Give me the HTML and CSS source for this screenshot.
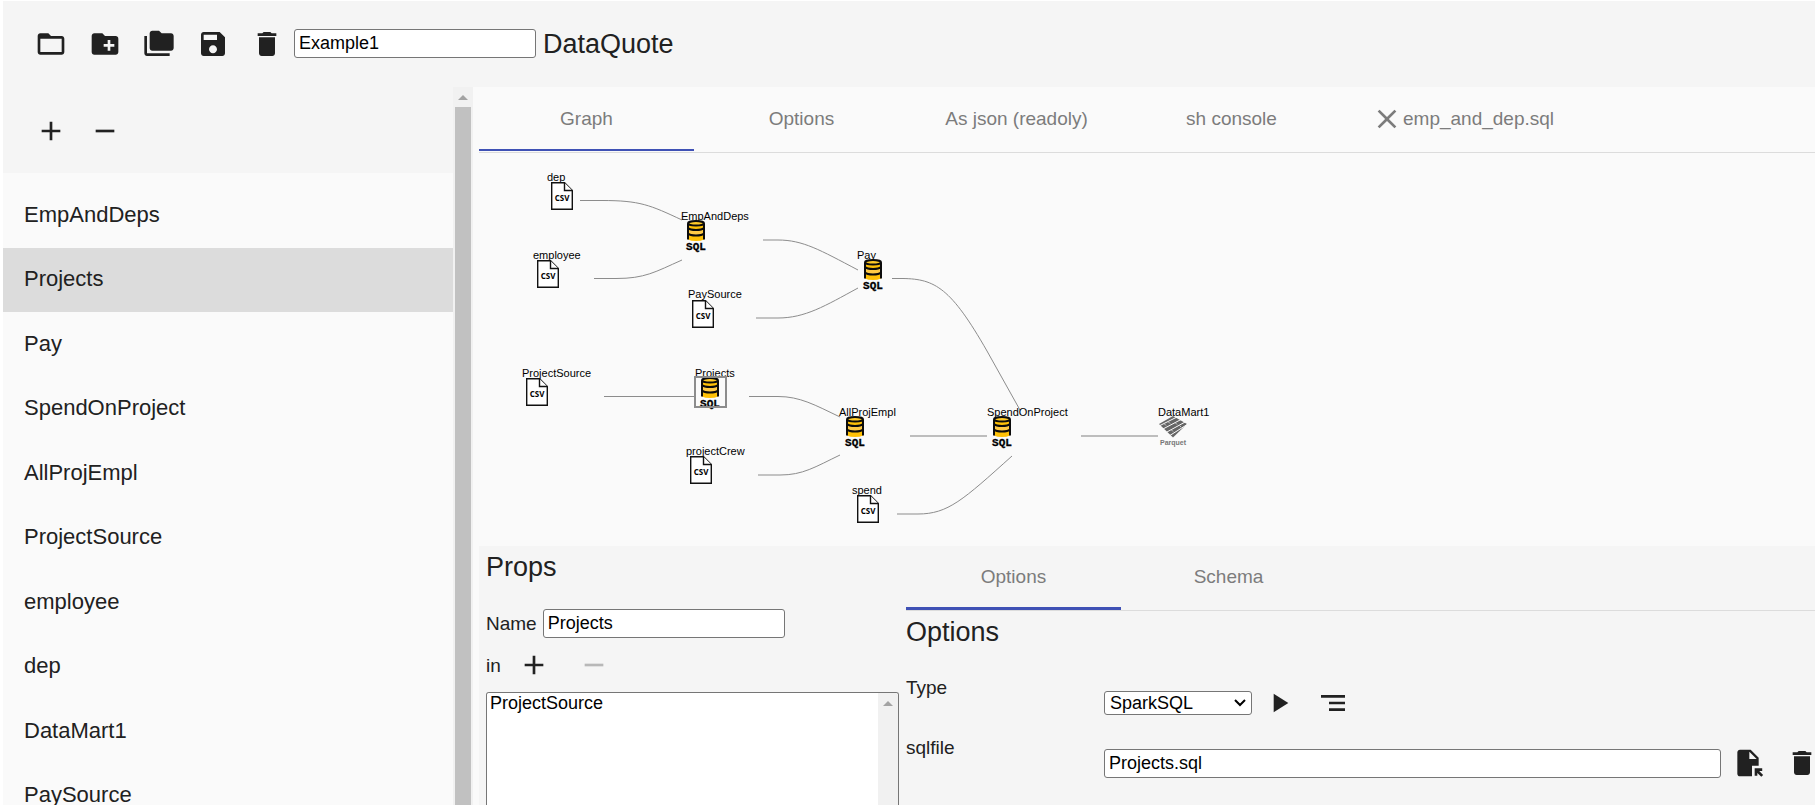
FILE: index.html
```html
<!DOCTYPE html>
<html lang="en">
<head>
<meta charset="utf-8">
<title>DataQuote</title>
<link rel="stylesheet" href="styles.css">
</head>
<body>
<svg class="defs" aria-hidden="true">
  <symbol id="i-add" viewBox="0 0 24 24"><path d="M19 13h-6v6h-2v-6H5v-2h6V5h2v6h6v2z"/></symbol>
  <symbol id="i-remove" viewBox="0 0 24 24"><path d="M19 13H5v-2h14v2z"/></symbol>
  <symbol id="i-delete" viewBox="0 0 24 24"><path d="M6 19c0 1.1.9 2 2 2h8c1.100 0 2-.9 2-2V7H6v12zM19 4h-3.500l-1-1h-5l-1 1H5v2h14V4z"/></symbol>
  <symbol id="csv" viewBox="0 0 22 28" overflow="visible">
    <path class="sheet" d="M.7.700H13.500L21.300 8.500V27.300H.7z"/><path class="sheet" d="M13.500.700V8.500H21.300"/>
    <text class="csv-text" x="11" y="19" text-anchor="middle">CSV</text>
  </symbol>
  <symbol id="sql" viewBox="0 0 20 32" overflow="visible">
    <path fill="#ffc107" d="M2 3.500h16V19.500q-3 1.500-8 1.500t-8-1.500z"/>
    <path fill="#ffca45" d="M2 8.500q8 4 16 0v5q-8 4-16 0z"/>
    <path class="db" d="M2 19.500V3.500M18 3.500V19.500M2 8q2 2 8 2t8-2M2 13.500q2 2 8 2t8-2"/>
    <ellipse class="db" fill="#ffca28" cx="10" cy="3.300" rx="8" ry="2.300"/>
    <text class="sql-text" x="10" y="30" text-anchor="middle">SQL</text>
  </symbol>
  <symbol id="parquet" viewBox="0 0 28 30" overflow="visible">
    <path fill="#666" d="M14 0L28 8 14 21.500 0 8z"/>
    <path class="gap" d="M-1 10.500L18 1M3 13.500L23 3M7 16.500L27 5.500M10 20L29 8"/>
    <path class="gap thin" d="M9 5.500L11 7.500M16 6.500L18 8.500M5 7.500L7 9.500M12 13.500L14 15.500M20 9L22 11"/>
    <text class="parquet-text" x="14" y="29" text-anchor="middle">Parquet</text>
  </symbol>
</svg>

<header class="toolbar main-bar">
  <button class="icon" aria-label="Open"><svg viewBox="0 0 24 24"><path d="M20 6h-8l-2-2H4c-1.100 0-1.990.9-1.990 2L2 18c0 1.100.9 2 2 2h16c1.100 0 2-.9 2-2V8c0-1.100-.9-2-2-2zm0 12H4V8h16v10z"/></svg></button>
  <button class="icon" aria-label="New"><svg viewBox="0 0 24 24"><path d="M20 6h-8l-2-2H4c-1.110 0-1.990.89-1.990 2L2 18c0 1.110.89 2 2 2h16c1.110 0 2-.89 2-2V8c0-1.110-.89-2-2-2zm-1 8h-3v3h-2v-3h-3v-2h3V9h2v3h3v2z"/></svg></button>
  <button class="icon" aria-label="Copy"><svg viewBox="0 0 24 24"><path d="M3 6H1v13c0 1.100.9 2 2 2h17v-2H3V6zm18-2h-7l-2-2H7c-1.100 0-2 .9-2 2v11c0 1.100.9 2 2 2h14c1.100 0 2-.9 2-2V6c0-1.100-.9-2-2-2z"/></svg></button>
  <button class="icon" aria-label="Save"><svg viewBox="0 0 24 24"><path d="M17 3H5c-1.110 0-2 .9-2 2v14c0 1.100.89 2 2 2h14c1.100 0 2-.9 2-2V7l-4-4zm-5 16c-1.660 0-3-1.340-3-3s1.340-3 3-3 3 1.340 3 3-1.340 3-3 3zm3-10H5V5h10v4z"/></svg></button>
  <button class="icon" aria-label="Delete"><svg><use href="#i-delete"/></svg></button>
  <input class="field" type="text" value="Example1" aria-label="Project name">
  <h1 class="title">DataQuote</h1>
</header>

<div class="body">
  <aside class="sidebar">
    <div class="side-scroll">
      <div class="toolbar side-bar">
        <button class="icon" aria-label="Add item"><svg><use href="#i-add"/></svg></button>
        <button class="icon" aria-label="Remove item"><svg><use href="#i-remove"/></svg></button>
      </div>
      <ul class="list">
        <li><a href="#">EmpAndDeps</a></li>
        <li class="selected"><a href="#">Projects</a></li>
        <li><a href="#">Pay</a></li>
        <li><a href="#">SpendOnProject</a></li>
        <li><a href="#">AllProjEmpl</a></li>
        <li><a href="#">ProjectSource</a></li>
        <li><a href="#">employee</a></li>
        <li><a href="#">dep</a></li>
        <li><a href="#">DataMart1</a></li>
        <li><a href="#">PaySource</a></li>
      </ul>
    </div>
    <div class="scrollbar"><span class="arrow"></span><span class="thumb"></span></div>
  </aside>

  <main class="content">
    <nav class="tabs">
      <button class="tab active">Graph</button>
      <button class="tab">Options</button>
      <button class="tab">As json (readoly)</button>
      <button class="tab">sh console</button>
      <button class="tab"><svg viewBox="0 0 24 24"><path d="M19 6.410L17.590 5 12 10.590 6.410 5 5 6.410 10.590 12 5 17.590 6.410 19 12 13.410 17.590 19 19 17.590 13.410 12z"/></svg>emp_and_dep.sql</button>
    </nav>

    <svg class="graph" role="img" aria-label="Data flow graph">
      <g transform="translate(-479 -153)">
        <g class="edges">
          <path d="M580 200.500H602C640 200.500 650 205 682 220"/>
          <path d="M594 278.500H616C645 278.500 655 272 682 260"/>
          <path d="M763 240H778C803 240 820 250 858 270"/>
          <path d="M756 318H778C805 318 825 306 858 288"/>
          <path d="M892 278.500H903C935 279 951 288 987 351L1020 410"/>
          <path d="M604 396.500H694"/>
          <path d="M749 396.500H778C800 396.500 815 405 840 417"/>
          <path d="M758 475H780C803 475 815 467 840 455"/>
          <path d="M897 514H918C948 514 963 500 1012 456"/>
          <path class="wide" d="M910 436H987M1081 436H1158"/>
        </g>
        <text x="547" y="181">dep</text><use href="#csv" x="551" y="182" width="22" height="28"/>
        <text x="533" y="259">employee</text><use href="#csv" x="537" y="260" width="22" height="28"/>
        <text x="688" y="298">PaySource</text><use href="#csv" x="692" y="300" width="22" height="28"/>
        <text x="522" y="377">ProjectSource</text><use href="#csv" x="526" y="378" width="22" height="28"/>
        <text x="686" y="455">projectCrew</text><use href="#csv" x="690" y="456" width="22" height="28"/>
        <text x="852" y="494">spend</text><use href="#csv" x="857" y="495" width="22" height="28"/>
        <text x="681" y="220">EmpAndDeps</text><use href="#sql" x="686" y="220" width="20" height="32"/>
        <text x="857" y="259">Pay</text><use href="#sql" x="863" y="259" width="20" height="32"/>
        <text x="839" y="416">AllProjEmpl</text><use href="#sql" x="845" y="416" width="20" height="32"/>
        <text x="987" y="416">SpendOnProject</text><use href="#sql" x="992" y="416" width="20" height="32"/>
        <text x="695" y="377">Projects</text><use href="#sql" x="700" y="377" width="20" height="32"/>
        <rect class="node-selected" x="695" y="377" width="31" height="30"/>
        <text x="1158" y="416">DataMart1</text><use href="#parquet" x="1159" y="416" width="28" height="30"/>
      </g>
    </svg>

    <section class="panel">
      <div class="props">
        <h2 class="heading">Props</h2>
        <div class="row"><label for="name">Name</label><input class="field" id="name" type="text" value="Projects"></div>
        <div class="row">
          <label for="in">in</label>
          <button class="icon" aria-label="Add input"><svg><use href="#i-add"/></svg></button>
          <button class="icon" aria-label="Remove input" disabled><svg><use href="#i-remove"/></svg></button>
        </div>
        <div class="listbox">
          <select id="in" multiple><option>ProjectSource</option></select>
          <div class="scrollbar"><span class="arrow"></span></div>
        </div>
      </div>
      <div class="details">
        <nav class="tabs">
          <button class="tab active">Options</button>
          <button class="tab">Schema</button>
        </nav>
        <h2 class="heading">Options</h2>
        <div class="option">
          <label for="type">Type</label>
          <div class="controls">
            <div class="dropdown">
              <select id="type"><option>SparkSQL</option></select>
              <svg viewBox="0 0 12 8"><path d="M1 1l5 5 5-5"/></svg>
            </div>
            <button class="icon" aria-label="Run"><svg viewBox="0 0 24 24"><path d="M8 5v14l11-7z"/></svg></button>
            <button class="icon" aria-label="Log"><svg viewBox="0 0 24 24"><path d="M9 18h12v-2H9v2zM3 6v2h18V6H3zm6 7h12v-2H9v2z"/></svg></button>
          </div>
        </div>
        <div class="option">
          <label for="sqlfile">sqlfile</label>
          <div class="controls">
            <input class="field grow" id="sqlfile" type="text" value="Projects.sql">
            <button class="icon" aria-label="Open file"><svg viewBox="0 0 24 24"><path d="M14 2H6c-1.100 0-1.990.9-1.990 2L4 20c0 1.100.89 2 1.990 2H15v-8h5V8l-6-6zm-1 7V3.500L18.500 9H13zM17 21.660V16h5.660v2h-2.240l2.950 2.950-1.410 1.410L19 19.410v2.240h-2z"/></svg></button>
            <button class="icon" aria-label="Delete file"><svg><use href="#i-delete"/></svg></button>
          </div>
        </div>
      </div>
    </section>
  </main>
</div>
</body>
</html>
```
FILE: styles.css
```css
* { box-sizing: border-box; }

body {
  margin: 0;
  padding: 1px 0 0 3px;
  height: 100vh;
  overflow: hidden;
  display: flex;
  flex-direction: column;
  background: #fff;
  color: #212121;
  font: 19px/27px "Liberation Sans", Arial, sans-serif;
}

.defs { display: none; }

h1, h2 { margin: 0; font-size: 27px; font-weight: 400; line-height: 42px; }

button, input, select { font-family: inherit; margin: 0; }

.toolbar {
  display: flex;
  align-items: center;
  flex: none;
  height: 86px;
  padding-left: 21px;
  background: #f5f5f5;
}
.main-bar { padding-bottom: 1px; }
.side-bar { padding-top: 2px; }

.title { margin-left: 7px; }

.icon {
  flex: none;
  display: flex;
  align-items: center;
  justify-content: center;
  width: 54px;
  height: 54px;
  padding: 0;
  border: 0;
  background: none;
  color: #212121;
}
.icon:disabled { color: #b8b8b8; }
.icon svg, .tab svg { width: 32px; height: 32px; fill: currentColor; }

.field {
  width: 242px;
  height: 29px;
  padding: 0 4px;
  border: 1px solid #767676;
  border-radius: 3px;
  background: #fff;
  color: #000;
  font-size: 18px;
}

.body { flex: 1; display: flex; min-height: 0; }

.sidebar { flex: none; display: flex; width: 470px; background: #fafafa; }
.side-scroll { flex: 1; overflow: hidden; }

.list {
  display: grid;
  grid-template-rows: repeat(10, 1fr);
  height: 655px;
  margin: 0;
  padding: 10px 0 0;
  list-style: none;
  font-size: 22px;
}
.list a {
  display: flex;
  align-items: center;
  height: 100%;
  padding: 0 21px 2px;
  color: inherit;
  text-decoration: none;
}
.selected { background: #dcdcdc; }

.scrollbar {
  flex: none;
  display: flex;
  flex-direction: column;
  align-items: center;
  width: 20px;
  padding-top: 8px;
  background: #f1f1f1;
}
.arrow {
  width: 10px;
  height: 5px;
  background: #a3a3a3;
  clip-path: polygon(50% 0, 100% 100%, 0 100%);
}
.thumb { flex: 1; width: 16px; margin-top: 7px; background: #c1c1c1; }

.content {
  flex: 1;
  display: flex;
  flex-direction: column;
  min-width: 0;
  padding-left: 6px;
  background: #fafafa;
}

.tabs {
  flex: none;
  display: flex;
  height: 66px;
  padding-bottom: 1px;
  border-bottom: 1px solid #dcdcdc;
}
.tab {
  display: flex;
  align-items: center;
  justify-content: center;
  min-width: 215px;
  padding: 1px 32px 0;
  border: 0;
  border-bottom: 2px solid transparent;
  background: none;
  color: #7c7c7c;
  font-size: 19px;
  white-space: nowrap;
}
.tab.active { border-bottom-color: #3f51b5; }

.graph { flex: none; display: block; width: 100%; height: 393px; font-size: 11px; }
.edges path { fill: none; stroke: #8c8c8c; stroke-width: 1; }
.edges .wide { stroke: #bdbdbd; stroke-width: 2; }
.sheet { fill: #fff; stroke: #111; stroke-width: 1.4; }
.db { stroke: #0c0c0c; stroke-width: 2; }
path.db { fill: none; }
.sql-text { font: bold 11px "Liberation Mono", monospace; fill: #000; stroke: #000; stroke-width: 0.3; }
.csv-text { font: bold 8px "Open Sans", sans-serif; fill: #000; }
.gap { fill: none; stroke: #fafafa; stroke-width: 1; }
.gap.thin { stroke: #ccc; }
.parquet-text { font: bold 7px "Liberation Sans", sans-serif; fill: #777; }
.node-selected { fill: none; stroke: #8c8c8c; stroke-width: 2; }

.panel { flex: 1; display: flex; min-height: 0; overflow: hidden; background: #f5f5f5; }
.heading { margin-bottom: 21px; }

.props {
  flex: none;
  display: flex;
  flex-direction: column;
  width: 427px;
  padding: 0 7px;
}
.row { display: flex; align-items: center; gap: 6px; }

.listbox {
  flex: 1;
  display: flex;
  border: 1px solid #767676;
  border-bottom: 0;
  border-radius: 3px 3px 0 0;
  background: #fff;
  overflow: hidden;
}
.listbox select {
  flex: 1;
  padding: 0;
  border: 0;
  outline: 0;
  background: #fff;
  color: #000;
  font-size: 18px;
  overflow: hidden;
}
.listbox option { padding: 0 3px; }

.details { flex: 1; min-width: 0; }
.details .tabs { height: 65px; padding-bottom: 0; }
.details .tab { padding-top: 0; border-bottom-width: 3px; }
.option { display: flex; height: 60px; }
.option label { flex: none; width: 198px; }
.controls { flex: 1; display: flex; align-items: center; height: 58px; margin-right: -14px; }
.grow { flex: 1; width: auto; min-width: 0; }

.dropdown { display: grid; align-items: center; width: 148px; }
.dropdown select, .dropdown svg { grid-area: 1 / 1; }
.dropdown select {
  appearance: none;
  width: 100%;
  height: 24px;
  padding: 0 5px;
  border: 1px solid #767676;
  border-radius: 3px;
  background: #fff;
  color: #000;
  font-size: 18px;
}
.dropdown svg {
  justify-self: end;
  width: 12px;
  height: 8px;
  margin-right: 6px;
  fill: none;
  stroke: #000;
  stroke-width: 2;
  pointer-events: none;
}
```
